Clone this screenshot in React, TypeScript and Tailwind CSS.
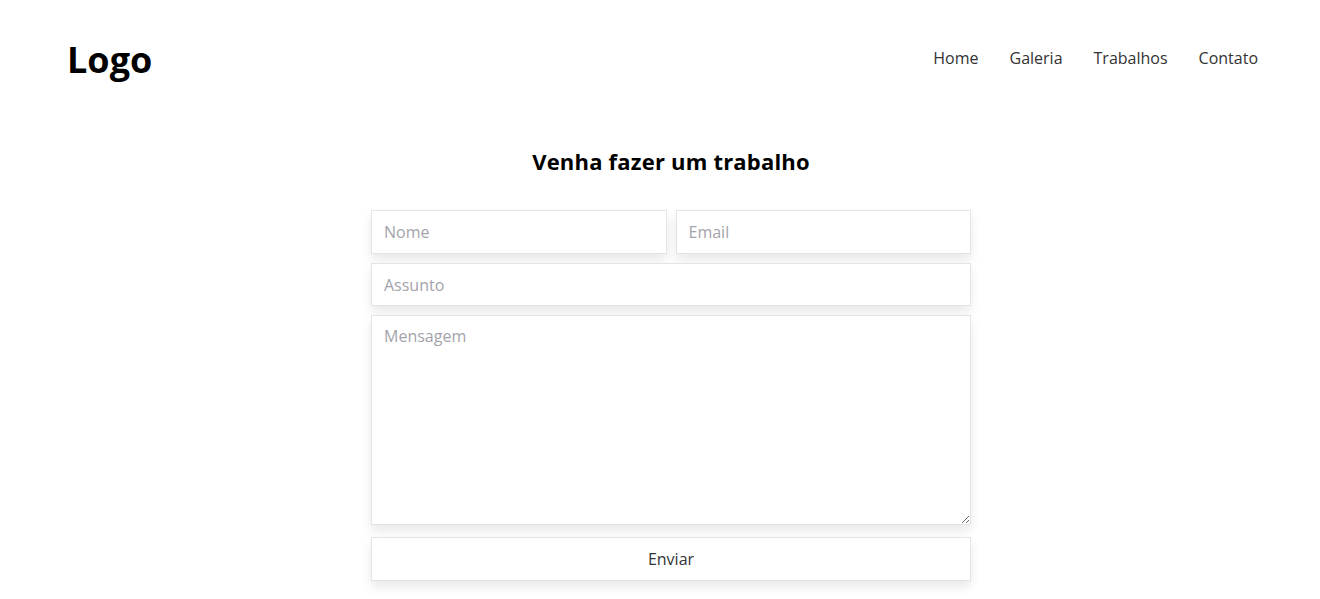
import React from "react";

const fieldClass =
  "w-full border border-[#e4e4e4] bg-white px-3 text-base text-[#333] placeholder:text-[#a3a3ab] outline-none shadow-[0_6px_10px_rgba(0,0,0,0.09)]";

const App = () => {
  return (
    <div className="min-h-screen bg-white font-['Open_Sans',sans-serif] text-black">
      <nav className="flex items-center justify-between pl-[67px] pr-[62px] pt-[38px]">
        <h1 className="text-[36px] font-bold leading-[44px]">Logo</h1>
        <ul className="flex items-center gap-[31px] text-[16px] text-[#333] -mt-1">
          <li>Home</li>
          <li>Galeria</li>
          <li>Trabalhos</li>
          <li>Contato</li>
        </ul>
      </nav>

      <section className="mx-auto w-[622px] pl-[22px] pt-[68px]">
        <h2 className="text-center text-[22px] font-bold leading-none tracking-[0.2px]">
          Venha fazer um trabalho
        </h2>

        <form className="mt-[38px] flex flex-col gap-[9px]">
          <div className="flex gap-[9px]">
            <input className={`${fieldClass} h-[44px]`} placeholder="Nome" />
            <input className={`${fieldClass} h-[44px]`} placeholder="Email" />
          </div>
          <input className={`${fieldClass} h-[43px]`} placeholder="Assunto" />
          <textarea
            className={`${fieldClass} block h-[210px] pt-[8px]`}
            placeholder="Mensagem"
          />
          <button
            type="button"
            className="mt-[3px] h-[44px] w-full border border-[#e4e4e4] bg-white text-base text-[#333] shadow-[0_6px_10px_rgba(0,0,0,0.09)]"
          >
            Enviar
          </button>
        </form>
      </section>
    </div>
  );
};

export default App;
